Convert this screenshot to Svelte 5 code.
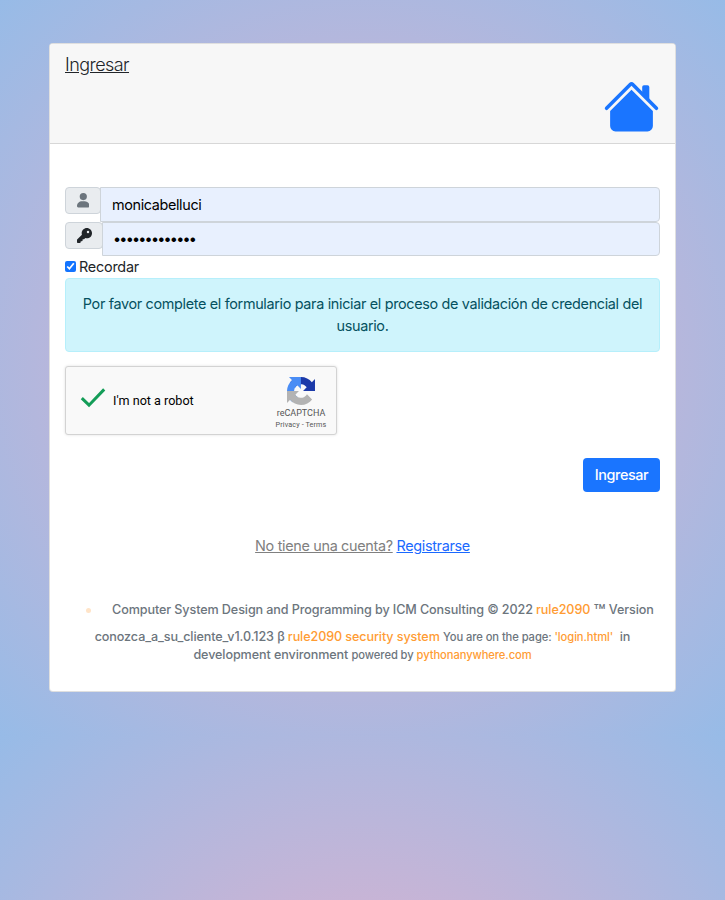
<script>
  let username = $state('monicabelluci');
  let password = $state('contrasena123');
  let remember = $state(true);
</script>

<div class="page">
  <main class="card">
    <header class="card-header">
      <h1>Ingresar</h1>
      <svg class="home" viewBox="0 0 16 16" fill="currentColor" aria-hidden="true">
        <path d="m8 3.293 6 6V13.5a1.5 1.5 0 0 1-1.5 1.5h-9A1.5 1.5 0 0 1 2 13.5V9.293l6-6zm5-.793V6l-2-2V2.5a.5.5 0 0 1 .5-.5h1a.5.5 0 0 1 .5.5z" />
        <path d="M7.293 1.5a1 1 0 0 1 1.414 0l6.647 6.646a.5.5 0 0 1-.708.708L8 2.207 1.354 8.854a.5.5 0 1 1-.708-.708L7.293 1.5z" />
      </svg>
    </header>

    <div class="card-body">
      <div class="group">
        <span class="addon user">
          <svg viewBox="0 0 448 512" width="12.6" height="14.4" fill="currentColor"><path d="M224 256A128 128 0 1 0 224 0a128 128 0 1 0 0 256zm-45.700 40C79.800 296 0 372 0 465c0 29 16 47 44 47H404c28 0 44-18 44-47C448 372 368.200 296 269.700 296H178.300z" /></svg>
        </span>
        <input class="field" type="text" bind:value={username} />
      </div>
      <div class="group second">
        <span class="addon key">
          <svg viewBox="0 0 512 512" width="15" height="15" fill="currentColor"><path d="M336 352c97.200 0 176-78.800 176-176S433.200 0 336 0 160 78.800 160 176c0 18.700 2.900 36.800 8.300 53.700L12 386c-8 8-12 16-12 28v64c0 20 14 34 34 34h58c20 0 34-12 34-32v-32h34c20 0 32-12 32-32v-32h36c10 0 16-3 22-9l32.300-31.300c16.900 5.400 35 8.300 53.700 8.300zM376 96a42 42 0 1 1 0 84 42 42 0 1 1 0-84z" /></svg>
        </span>
        <input class="field password" type="password" bind:value={password} />
      </div>

      <label class="remember"><input type="checkbox" bind:checked={remember} /><span>Recordar</span></label>

      <div class="alert">Por favor complete el formulario para iniciar el proceso de validación de credencial del<br />usuario.</div>

      <div class="captcha">
        <svg class="tick" viewBox="0 0 26 20" width="26" height="20"><path d="M1.8 10.2 L9 17.2 L24.2 1.4" fill="none" stroke="#149d58" stroke-width="3" /></svg>
        <span class="robot">I'm not a robot</span>
        <div class="brand">
          <svg viewBox="0 0 64 64" width="28" height="28">
            <path fill="#1c3aa9" d="M64 31.955l-.033-1.37V4.687l-7.16 7.16C50.948 4.674 42.033.093 32.05.093c-10.4 0-19.622 4.96-25.458 12.64l11.736 11.86a15.55 15.55 0 0 1 4.754-5.334c2.05-1.6 4.952-2.906 8.968-2.906.485 0 .86.057 1.135.163 4.976.393 9.288 3.14 11.828 7.124l-8.307 8.307L64 31.953" />
            <path fill="#4a8df5" d="M31.862.094l-1.37.033H4.594l7.16 7.16C4.58 13.147 0 22.06 0 32.046c0 10.4 4.96 19.622 12.64 25.458L24.5 45.768a15.55 15.55 0 0 1-5.334-4.754c-1.6-2.05-2.906-4.952-2.906-8.968 0-.485.057-.86.163-1.135.393-4.976 3.14-9.288 7.124-11.828l8.307 8.307L31.86.095" />
            <path fill="#b3b3b3" d="M.001 32.045l.033 1.37v25.898l7.16-7.16c5.86 7.173 14.774 11.754 24.76 11.754 10.4 0 19.622-4.96 25.458-12.64l-11.736-11.86a15.55 15.55 0 0 1-4.754 5.334c-2.05 1.6-4.952 2.906-8.968 2.906-.485 0-.86-.057-1.135-.163-4.976-.393-9.288-3.14-11.828-7.124l8.307-8.307c-10.522.04-22.4.066-27.295-.005" />
          </svg>
          <span class="name">reCAPTCHA</span>
          <span class="terms">Privacy - Terms</span>
        </div>
      </div>

      <div class="actions"><button type="button">Ingresar</button></div>

      <p class="signup"><span class="ask">No tiene una cuenta?</span> <span class="link">Registrarse</span></p>

      <footer>
        <div class="line first"><i class="dot"></i><span>Computer System Design and Programming by ICM Consulting © 2022 <b>rule2090</b> <span class="tm">™</span> Version</span></div>
        <div class="line"><span class="version">conozca_a_su_cliente_v1.0.123 β <b>rule2090 security system</b></span> <small>You are on the page: <b>'login.html'</b></small>&nbsp; in</div>
        <div class="line last">development environment <small>powered by <b>pythonanywhere.com</b></small></div>
      </footer>
    </div>
  </main>
</div>

<style>
  :global(body) { margin: 0; }
  * { box-sizing: border-box; }
  .page {
    height: 900px;
    padding: 43px 49px 0;
    overflow: hidden;
    background: radial-gradient(circle, rgb(230, 176, 203) 0%, rgb(151, 187, 231) 100%) 0 0 / 725px 735px;
    font: 14.4px/21.6px Inter, "Liberation Sans", sans-serif;
    color: #212529;
  }
  .card {
    height: 649px;
    background: #fff;
    border: 1px solid rgba(0, 0, 0, 0.125);
    border-radius: 4px;
  }
  .card-header {
    height: 100px;
    padding: 10px 15px 0;
    background: #f7f7f7;
    border-bottom: 1px solid #d7d7d7;
    border-radius: 3px 3px 0 0;
  }
  h1 {
    margin: 0;
    font-size: 18px;
    line-height: 22px;
    font-weight: 300;
    letter-spacing: -0.55px;
    text-decoration: underline;
  }
  .home { display: block; width: 57px; height: 57px; margin: 2px 0 0 auto; color: #1a75ff; }
  .card-body { display: flex; flex-direction: column; padding: 43px 15px 0; }
  .group { display: flex; align-items: flex-start; height: 35px; }
  .second { height: 34px; }
  .addon {
    display: flex;
    align-items: center;
    justify-content: center;
    width: 36px;
    height: 27px;
    border: 1px solid #ced4da;
    border-radius: 4px;
    background: #e9ecef;
  }
  .user { color: #6c757d; }
  .key { width: 38px; color: #212529; padding-bottom: 1px; }
  .addon svg { flex: none; }
  .field {
    flex: 1;
    min-width: 0;
    height: 100%;
    margin: 0 0 0 -1px;
    padding: 0 11px;
    border: 1px solid #ced4da;
    border-radius: 0 4px 4px 0;
    background: #e8f0fe;
    color: #000;
    font: inherit;
    letter-spacing: -0.36px;
    outline: 0;
  }
  .password { padding: 0 10px 1px; letter-spacing: -1.78px; }
  .remember { display: flex; align-items: center; height: 22px; gap: 3px; letter-spacing: -0.22px; }
  .remember input { width: 11px; height: 11px; margin: 0 0 1px; accent-color: #1374ff; }
  .alert {
    height: 74px;
    padding: 14px 0 0;
    border: 1px solid #b6effb;
    border-radius: 4px;
    background: #cff4fc;
    color: #055160;
    line-height: 22px;
    letter-spacing: -0.33px;
    text-align: center;
    white-space: nowrap;
  }
  .captcha {
    display: flex;
    align-items: flex-start;
    width: 272px;
    height: 69px;
    margin-top: 14px;
    padding-left: 14px;
    border: 1px solid #d3d3d3;
    border-radius: 3px;
    background: #f9f9f9;
    box-shadow: 0 0 3px rgba(0, 0, 0, 0.12);
    font-family: Roboto, sans-serif;
    color: #000;
  }
  .tick { margin-top: 21px; }
  .robot { margin: 23px 0 0 7px; font-size: 12.6px; }
  .brand { display: flex; flex-direction: column; align-items: center; width: 70px; margin: 10px 0 0 auto; color: #555; white-space: nowrap; }
  .name { margin-top: 3px; font-size: 9px; line-height: 11px; }
  .terms { font-size: 7.2px; line-height: 11px; letter-spacing: 0.13px; }
  .actions { display: flex; justify-content: flex-end; margin-top: 23px; }
  button {
    width: 77px;
    height: 34px;
    padding: 0;
    border: 0;
    border-radius: 4px;
    background: #1a75ff;
    color: #fff;
    font: inherit;
    font-weight: 500;
    letter-spacing: -0.42px;
  }
  .signup { margin: 43px 0 0; line-height: 22px; text-align: center; letter-spacing: -0.32px; }
  .signup span { text-decoration: underline; }
  .ask { color: #808080; }
  .link { color: #1a69ff; }
  footer { margin-top: 44px; color: #6c757d; font-size: 12.6px; font-weight: 500; letter-spacing: -0.1px; white-space: nowrap; }
  .line { height: 18px; line-height: 18px; text-align: center; }
  .first { display: flex; align-items: center; margin-bottom: 9px; padding-left: 21px; }
  .dot { width: 5px; height: 5px; margin-right: 21px; border-radius: 50%; background: #ffe4c8; }
  .tm { font-size: 19.5px; line-height: 0; vertical-align: -5px; }
  b { font-weight: inherit; color: #ff9c33; }
  small { font-size: 11.2px; letter-spacing: -0.08px; }
</style>
